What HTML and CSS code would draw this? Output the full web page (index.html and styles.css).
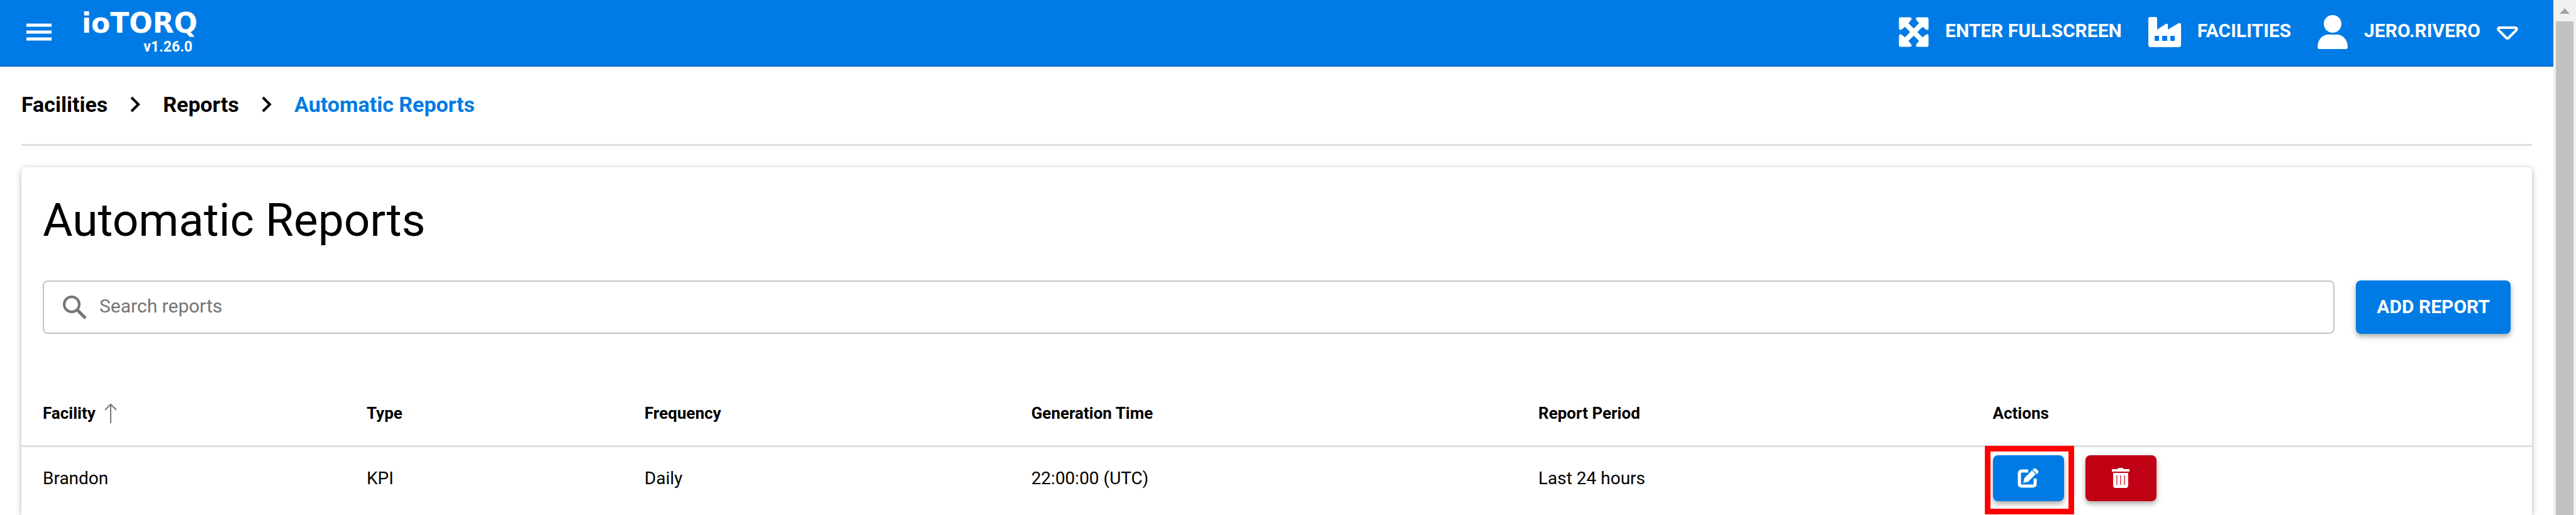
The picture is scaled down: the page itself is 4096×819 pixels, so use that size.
FILE: index.html
```html
<!DOCTYPE html>
<html lang="en">
<head>
    <meta charset="UTF-8">
    <meta name="viewport" content="width=device-width, initial-scale=1.0">
    <title>Automatic Reports</title>
    <link rel="stylesheet" href="styles.css">
</head>
<body>

    <div class="page">
        <header class="topbar">
            <button class="menu-button" aria-label="Menu">
                <svg width="40" height="28" viewBox="0 0 40 28"><path d="M0 3h40M0 14h40M0 25h40" stroke="currentColor" stroke-width="5"/></svg>
            </button>
            <div class="brand">
                <a class="logo" href="#">ioTORQ</a>
                <span class="version">v1.26.0</span>
            </div>
            <div class="topbar-actions">
                <button class="top-button">
                    <svg width="48" height="48" viewBox="0 0 48 48" fill="none" stroke="currentColor" stroke-linecap="round" stroke-linejoin="round">
                        <path d="M9 9l30 30M39 9L9 39" stroke-width="8"/>
                        <path d="M3 18V3h15l-4 5-6 6zM30 3h15v15l-5-4-6-6zM3 30v15h15l-4-5-6-6zM45 30v15H30l4-5 6-6z" fill="currentColor" stroke-width="5"/>
                    </svg>
                    <span>ENTER FULLSCREEN</span>
                </button>
                <button class="top-button">
                    <svg width="52" height="48" viewBox="0 0 52 48">
                        <path fill="currentColor" fill-rule="evenodd" d="M3 0h8q3 0 3 3v17l14-9q3-1 3 1v8l17-10q4-1 4 2v32q0 4-4 4H4q-4 0-4-4V3q0-3 3-3zM10 30v8h7v-8zM22 30v8h8v-8zM35 30v8h7v-8z"/>
                    </svg>
                    <span>FACILITIES</span>
                </button>
                <button class="top-button">
                    <svg width="48" height="54" viewBox="0 0 48 54" fill="currentColor">
                        <ellipse cx="24" cy="14" rx="14" ry="14"/>
                        <path d="M3 54q-3 0-3-3c0-12 8-20 17-20h14c9 0 17 8 17 20q0 3-3 3z"/>
                    </svg>
                    <span>JERO.RIVERO</span>
                    <svg class="caret" width="34" height="22" viewBox="0 0 34 22"><path d="M4 2h26q3 1 1 4L19 18q-2 2-4 0L3 6q-2-3 1-4z" fill="none" stroke="currentColor" stroke-width="4"/></svg>
                </button>
            </div>
        </header>

        <main class="content">
            <nav class="breadcrumbs" aria-label="Breadcrumb">
                <a href="#">Facilities</a>
                <svg width="16" height="26" viewBox="0 0 16 26"><path d="M2 2l11 11L2 24" fill="none" stroke="currentColor" stroke-width="4"/></svg>
                <a href="#">Reports</a>
                <svg width="16" height="26" viewBox="0 0 16 26"><path d="M2 2l11 11L2 24" fill="none" stroke="currentColor" stroke-width="4"/></svg>
                <a class="current" href="#" aria-current="page">Automatic Reports</a>
            </nav>

            <section class="card">
                <h1>Automatic Reports</h1>
                <div class="toolbar">
                    <label class="search">
                        <svg width="38" height="38" viewBox="0 0 38 38" fill="none" stroke="currentColor" stroke-width="4"><circle cx="14" cy="14" r="12"/><path d="M22 22l14 14" stroke-width="5"/></svg>
                        <input type="text" placeholder="Search reports" aria-label="Search reports">
                    </label>
                    <button class="button">ADD REPORT</button>
                </div>

                <table class="reports">
                    <thead>
                        <tr>
                            <th class="col-facility">
                                <span class="sorted">Facility
                                    <svg width="20" height="32" viewBox="0 0 20 32"><path d="M10 32V2M1 11l9-9 9 9" fill="none" stroke="currentColor" stroke-width="2"/></svg>
                                </span>
                            </th>
                            <th class="col-type">Type</th>
                            <th class="col-frequency">Frequency</th>
                            <th class="col-time">Generation Time</th>
                            <th class="col-period">Report Period</th>
                            <th>Actions</th>
                        </tr>
                    </thead>
                    <tbody>
                        <tr>
                            <td>Brandon</td>
                            <td>KPI</td>
                            <td>Daily</td>
                            <td>22:00:00 (UTC)</td>
                            <td>Last 24 hours</td>
                            <td>
                                <div class="row-actions">
                                    <div class="highlight">
                                        <button class="button icon-button" aria-label="Edit">
                                            <svg width="34" height="32" viewBox="0 0 34 32">
                                                <path d="M17 5H7Q3 5 3 9v16q0 4 4 4h17q4 0 4-4v-8" fill="none" stroke="currentColor" stroke-width="5"/>
                                                <path d="M9 24l2-8L23 4l6 6-12 12zM25 2q2-2 4-1l4 4q1 2-1 4l-1 1-7-7z" fill="currentColor"/>
                                            </svg>
                                        </button>
                                    </div>
                                    <button class="button icon-button danger" aria-label="Delete">
                                        <svg width="28" height="32" viewBox="0 0 28 32">
                                            <path fill="currentColor" d="M1 2h8q1-2 3-2h4q2 0 3 2h8q1 0 1 1v3H0V3q0-1 1-1zM2 8h24v20q0 4-4 4H6q-4 0-4-4z"/>
                                            <path class="slots" d="M8 12v15M14 12v15M20 12v15"/>
                                        </svg>
                                    </button>
                                </div>
                            </td>
                        </tr>
                    </tbody>
                </table>
            </section>
        </main>
    </div>

    <div class="scrollbar">
        <svg width="16" height="9" viewBox="0 0 16 9"><path d="M8 0l8 9H0z" fill="#a3a3a3"/></svg>
        <div class="thumb"></div>
    </div>

</body>
</html>
```
FILE: styles.css
```css
* { margin: 0; padding: 0; box-sizing: border-box; }
body { display: flex; min-height: 100vh; background: #fff; color: #000; font-family: Roboto, sans-serif; font-size: 28px; }
a { color: inherit; text-decoration: none; }
button { border: none; background: none; color: inherit; font: inherit; cursor: pointer; }
svg { display: block; flex-shrink: 0; }

.page { display: flex; flex: 1; flex-direction: column; min-width: 0; }

.topbar { display: flex; align-items: center; height: 106px; padding: 0 56px 2px 42px; background: #007be5; color: #fff; border-bottom: 2px solid #0068c8; }
.brand { display: flex; flex-direction: column; align-items: flex-end; margin-left: 48px; }
.logo { font-family: "DejaVu Sans", sans-serif; font-weight: bold; font-size: 44px; line-height: 48px; }
.version { padding-right: 8px; font-size: 23px; font-weight: bold; line-height: 28px; }
.topbar-actions { display: flex; gap: 42px; margin-left: auto; }
.top-button { display: flex; align-items: center; gap: 26px; font-size: 30px; font-weight: bold; line-height: 54px; }
.top-button span { padding-bottom: 4px; line-height: 50px; }
.caret { margin-top: 4px; }

.content { display: flex; flex: 1; flex-direction: column; padding: 0 34px; }
.breadcrumbs { display: flex; align-items: center; gap: 36px; padding: 40px 0 43px; border-bottom: 3px solid #e0e0e0; font-size: 34px; font-weight: bold; line-height: 40px; }
.breadcrumbs .current { color: #007be5; }

.card { flex: 1; margin-top: 34px; padding-top: 42px; border-radius: 8px 8px 0 0; box-shadow: 0 2px 10px rgba(0, 0, 0, 0.3); }
.card h1 { padding: 0 34px; font-size: 73px; font-weight: 400; line-height: 84px; }

.toolbar { display: flex; gap: 34px; margin-top: 54px; padding: 0 34px; }
.search { display: flex; flex: 1; align-items: center; gap: 20px; height: 85px; padding: 0 30px; border: 2px solid #c4c4c4; border-radius: 8px; color: #757575; }
.search input { flex: 1; padding-bottom: 4px; border: none; outline: none; background: none; font: inherit; font-size: 30px; }
.search input::placeholder { color: #757575; }

.button { padding: 0 33px 2px; border-radius: 8px; background: #007be5; color: #fff; font-size: 30px; font-weight: bold; box-shadow: 0 4px 8px rgba(0, 0, 0, 0.35); }
.icon-button { display: flex; align-items: center; justify-content: center; width: 113px; height: 73px; }
.danger { background: #c00013; }
.slots { stroke: #c00013; stroke-width: 2; opacity: 0.6; }

.reports { width: 100%; margin-top: 76px; border-collapse: collapse; table-layout: fixed; text-align: left; }
.reports th { height: 102px; padding: 0 34px; border-bottom: 3px solid #e0e0e0; font-size: 26px; font-weight: bold; }
.reports td { height: 102px; padding: 0 34px; }
.col-facility { width: 12.9%; }
.col-type { width: 11.07%; }
.col-frequency { width: 15.4%; }
.col-time { width: 20.2%; }
.col-period { width: 18.1%; }
.sorted { display: flex; align-items: center; gap: 14px; }
.sorted svg { color: #757575; }

.row-actions { display: flex; gap: 34px; }
.highlight { position: relative; }
.highlight::after { content: ""; position: absolute; inset: -15px -16px -21px -13px; border: 9px solid #f00; pointer-events: none; }

.scrollbar { display: flex; flex-direction: column; align-items: center; gap: 12px; width: 36px; padding-top: 13px; background: #f1f1f1; }
.thumb { flex: 1; width: 28px; background: #c1c1c1; }
```
